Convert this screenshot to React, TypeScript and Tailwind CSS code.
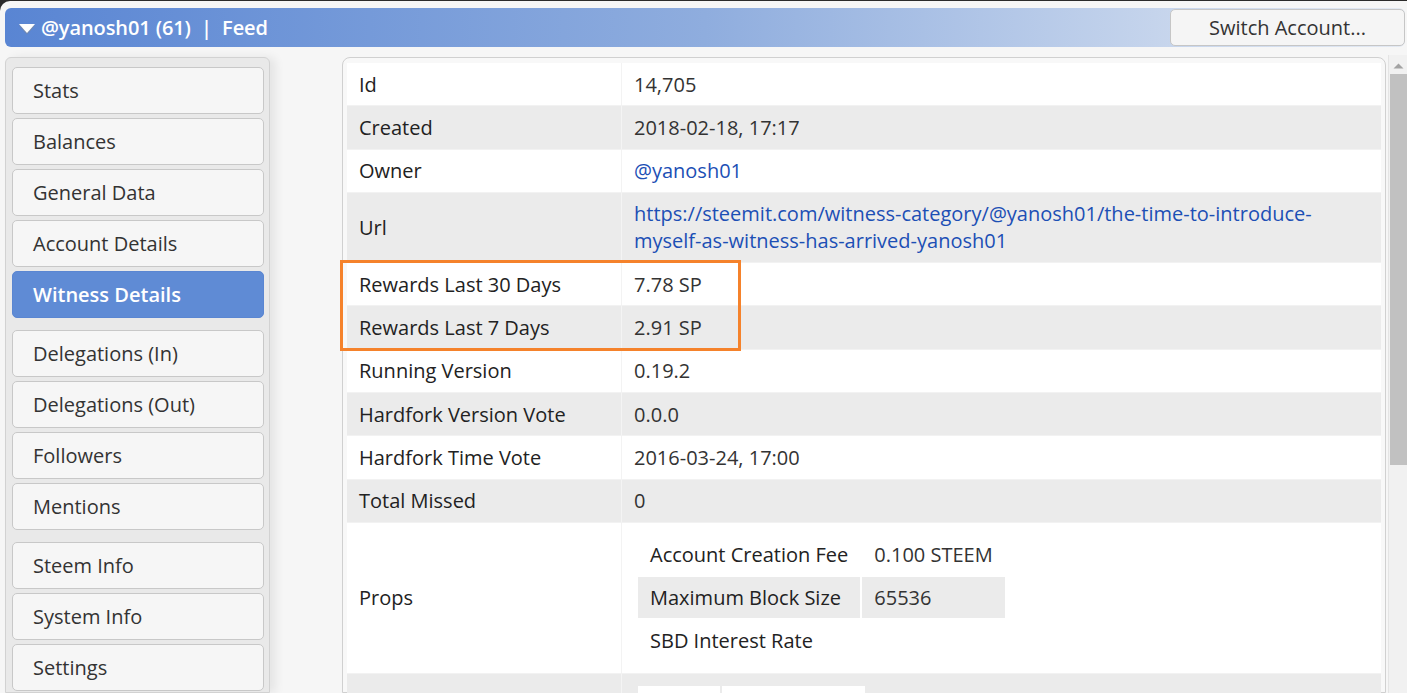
import React from 'react';

type Row = { label: string; value?: React.ReactNode };

const navGroups: string[][] = [
  ['Stats', 'Balances', 'General Data', 'Account Details', 'Witness Details'],
  ['Delegations (In)', 'Delegations (Out)', 'Followers', 'Mentions'],
  ['Steem Info', 'System Info', 'Settings'],
];

const rows: Row[] = [
  { label: 'Id', value: '14,705' },
  { label: 'Created', value: '2018-02-18, 17:17' },
  { label: 'Owner', value: <span className="text-[#1c4fb5]">@yanosh01</span> },
  {
    label: 'Url',
    value: (
      <span className="text-[#1c4fb5]">
        https://steemit.com/witness-category/@yanosh01/the-time-to-introduce-
        <br />
        myself-as-witness-has-arrived-yanosh01
      </span>
    ),
  },
  { label: 'Rewards Last 30 Days', value: '7.78 SP' },
  { label: 'Rewards Last 7 Days', value: '2.91 SP' },
  { label: 'Running Version', value: '0.19.2' },
  { label: 'Hardfork Version Vote', value: '0.0.0' },
  { label: 'Hardfork Time Vote', value: '2016-03-24, 17:00' },
  { label: 'Total Missed', value: '0' },
];

const props: [string, string][] = [
  ['Account Creation Fee', '0.100 STEEM'],
  ['Maximum Block Size', '65536'],
  ['SBD Interest Rate', ''],
];

const NavButton: React.FC<{ label: string; active?: boolean }> = ({ label, active }) => (
  <div
    className={
      active
        ? 'h-[47px] flex items-center pl-[20px] rounded-[5px] border border-[#5a86d2] bg-[#5f8bd5] text-white font-semibold text-[20px]'
        : 'h-[47px] flex items-center pl-[20px] rounded-[5px] border border-[#c8c8c8] bg-[#f6f6f6] text-[#333] text-[20px]'
    }
  >
    {label}
  </div>
);

const App: React.FC = () => {
  return (
    <div
      className="h-[693px] w-[1407px] overflow-hidden bg-[#2b2b2b] pt-[1px]"
      style={{ fontFamily: '"Open Sans", "Noto Sans", sans-serif' }}
    >
      <div className="h-full rounded-tl-[10px] bg-[#f6f6f6] flex flex-col">
        {/* top bar */}
        <div className="relative mt-[7px] ml-[5px] mr-[2px] h-[39px] rounded-[6px] bg-linear-to-r from-[#5985d3] via-[#8fadde] via-50% to-[#e4eaf3] flex items-center">
          <svg width="20" height="13" viewBox="0 0 20 13" className="ml-[12px] mt-[2px]">
            <path d="M2 2.5 L18 2.5 L10 11.5 Z" fill="#8a8a8a" opacity="0.5" transform="translate(0 1)" />
            <path d="M2 2 L18 2 L10 11 Z" fill="#ffffff" />
          </svg>
          <span className="ml-[4px] text-white font-semibold text-[20px] tracking-[-0.1px] whitespace-pre">
            @yanosh01 (61)  |  Feed
          </span>
          <div className="absolute right-0 top-[1px] h-[37px] w-[235px] rounded-[5px] border border-[#c6c6c6] bg-[#f5f5f5] flex items-center justify-center text-[20px] text-[#333]">
            Switch Account...
          </div>
        </div>

        <div className="flex flex-1 mt-[10px] min-h-0">
          {/* side navigation */}
          <div className="ml-[5px] w-[265px] rounded-t-[6px] border border-[#d2d2d2] bg-[#e9e9e9] pt-[9px] pl-[6px] pr-[5px] shadow-[6px_0_10px_rgba(0,0,0,0.07)] flex flex-col gap-[12px]">
            {navGroups.map((group, gi) => (
              <div key={gi} className="flex flex-col gap-[4px]">
                {group.map((item) => (
                  <NavButton key={item} label={item} active={item === 'Witness Details'} />
                ))}
              </div>
            ))}
          </div>

          {/* witness table */}
          <div className="ml-[72px] w-[1044px] rounded-t-[8px] border border-[#d0d0d0] bg-[#f8f8f8] pt-[5px] px-[4px]">
            <div className="relative flex flex-col gap-px bg-[#f2f2f2] text-[20px] leading-[27px]">
              {rows.map((r, i) => (
                <div
                  key={r.label}
                  className={`grid grid-cols-[274px_1fr] gap-px ${i % 2 ? 'bg-[#f4f4f4]' : 'bg-[#f3f3f3]'}`}
                >
                  <div className={`px-[12px] py-[7.65px] font-medium text-[#222] flex items-center ${i % 2 ? 'bg-[#ebebeb]' : 'bg-white'}`}>
                    {r.label}
                  </div>
                  <div className={`px-[12px] py-[7.65px] text-[#333] ${i % 2 ? 'bg-[#ebebeb]' : 'bg-white'}`}>{r.value}</div>
                </div>
              ))}

              <div className="grid grid-cols-[274px_1fr] gap-px bg-[#f3f3f3]">
                <div className="bg-white px-[12px] flex items-center font-medium text-[#222]">Props</div>
                <div className="bg-white pl-[14px] pt-[9px] pb-[10px]">
                  <table className="border-separate border-spacing-[2px]">
                    <tbody>
                      {props.map(([k, v], i) => (
                        <tr key={k} className={i === 1 ? 'bg-[#ebebeb]' : ''}>
                          <td className="h-[41px] pl-[12px] pr-[12px] font-medium text-[#222]">{k}</td>
                          <td className="h-[41px] pl-[12px] pr-[12px] text-[#333]">{v}</td>
                        </tr>
                      ))}
                    </tbody>
                  </table>
                </div>
              </div>

              <div className="grid grid-cols-[274px_1fr] gap-px bg-[#f4f4f4] h-[60px]">
                <div className="bg-[#ebebeb]" />
                <div className="bg-[#ebebeb] pl-[16px] pt-[12px] flex gap-[2px]">
                  <div className="w-[82px] h-[40px] bg-white" />
                  <div className="w-[143px] h-[40px] bg-white" />
                </div>
              </div>

              {/* highlight around the rewards rows */}
              <div className="absolute left-[-7px] top-[197px] w-[401px] h-[91px] border-[3px] border-[#f5822b]" />
            </div>
          </div>

          {/* scrollbar */}
          <div className="ml-[2px] w-[19px] -mt-[2px] bg-[#f1f1f1] border-l border-[#e4e4e4] flex flex-col items-center">
            <svg width="11" height="6" viewBox="0 0 11 6" className="mt-[8px]">
              <path d="M0.5 5.5 L5.5 0.5 L10.5 5.5 Z" fill="#a3a3a3" />
            </svg>
            <div className="mt-[5px] w-[17px] ml-[1px] h-[391px] bg-[#c1c1c1]" />
          </div>
        </div>
      </div>
    </div>
  );
};

export default App;
